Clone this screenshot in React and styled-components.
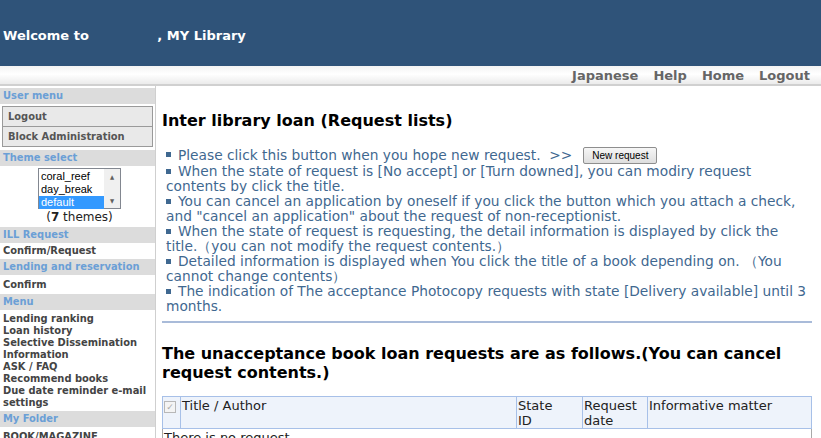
import React from 'react';
import styled, { createGlobalStyle } from 'styled-components';

const GlobalStyle = createGlobalStyle`
  html, body {
    margin: 0;
    padding: 0;
    background: #fff;
  }
  body {
    font-family: "DejaVu Sans", Verdana, sans-serif;
    width: 821px;
    overflow: hidden;
  }
`;

// ============== Header
const Header = styled.div`
  height: 66px;
  background-color: #2f5379;
  display: flex;
  align-items: center;
  padding: 4px 0 0 3px;
  box-sizing: border-box;
  color: #fff;
  font-weight: bold;
  font-size: 13px;
`;
const UserName = styled.span`
  display: inline-block;
  width: 64px;
`;

const NavBar = styled.div`
  height: 18px;
  background: linear-gradient(#f3f3f3, #ffffff 45%, #ebebeb);
  border-bottom: 2px solid #d0d0d0;
  display: flex;
  justify-content: flex-end;
  align-items: center;
  gap: 15px;
  padding-right: 11px;
`;
const NavLink = styled.span`
  color: #666;
  font-weight: bold;
  font-size: 13px;
`;

// ============== Corpo
const Body = styled.div`
  display: flex;
  align-items: stretch;
  min-height: 360px;
`;

const Sidebar = styled.div`
  width: 155px;
  flex-shrink: 0;
  border-right: 1px solid #cfcfcf;
  padding-top: 2px;
  font-family: "DejaVu Sans Condensed", "DejaVu Sans", sans-serif;
  font-size: 11px;
`;
const SideHead = styled.div`
  background-color: #dcdcdc;
  color: #6b9fd6;
  font-weight: bold;
  height: 16px;
  line-height: 16px;
  padding-left: 3px;
  margin-top: ${p => p.$gap || 0}px;
`;
const BoxList = styled.div`
  margin: 2px 2px 0 2px;
  border: 1px solid #9a9a9a;
  background: #e9e9e9;
`;
const BoxItem = styled.div`
  height: 19px;
  line-height: 19px;
  padding-left: 5px;
  color: #555;
  font-weight: bold;
  border-top: ${p => (p.$first ? 'none' : '1px solid #9a9a9a')};
`;
const SideItem = styled.div`
  color: #444;
  font-weight: bold;
  padding: ${p => p.$pad || '1px 0 1px 3px'};
  line-height: ${p => p.$lh || 14}px;
`;

const ThemeBox = styled.div`
  display: flex;
  flex-direction: column;
  align-items: center;
  padding: 2px 0 3px;
`;
const ListBox = styled.div`
  width: 81px;
  height: 39px;
  border: 1px solid #828790;
  display: flex;
  background: #fff;
  margin-left: 4px;
`;
const Options = styled.div`
  flex: 1;
  padding-top: 1px;
`;
const Option = styled.div`
  height: 13px;
  line-height: 13px;
  padding-left: 2px;
  font-family: "Liberation Sans", Arial, sans-serif;
  font-size: 11px;
  color: ${p => (p.$selected ? '#fff' : '#000')};
  background: ${p => (p.$selected ? '#3399ff' : 'transparent')};
`;
const ScrollBar = styled.div`
  width: 16px;
  background: #f0f0f0;
  display: flex;
  flex-direction: column;
  justify-content: space-between;
  align-items: center;
  padding: 4px 0;
  box-sizing: border-box;
  font-size: 6px;
  color: #606060;
`;
const ThemeCount = styled.div`
  font-family: "DejaVu Sans", Verdana, sans-serif;
  font-size: 12px;
  color: #222;
  margin-top: 1px;
  margin-left: 4px;
  b { font-weight: bold; }
`;

// ============== Conteúdo
const Main = styled.div`
  flex: 1;
  padding: 25px 9px 0 6px;
  min-width: 0;
`;
const Title = styled.h2`
  margin: 0;
  font-size: 16px;
  line-height: 19px;
  font-weight: bold;
  color: #000;
`;
const Notes = styled.div`
  margin: 17px 0 0 4px;
  color: #3f6890;
  font-size: 13.75px;
  line-height: 15px;
`;
const Note = styled.div`
  margin: 0;
`;
const Bullet = styled.span`
  display: inline-block;
  width: 5px;
  height: 5px;
  background: #3f6890;
  margin: 0 7px 2px 0;
  vertical-align: middle;
`;
const NewButton = styled.button`
  font-family: "Liberation Sans", Arial, sans-serif;
  font-size: 10px;
  color: #000;
  height: 17px;
  padding: 0 8px;
  margin-left: 11px;
  border: 1px solid #8e8e8e;
  border-radius: 2px;
  background: linear-gradient(#f6f6f6, #dedede);
  vertical-align: middle;
`;
const Rule = styled.hr`
  border: none;
  height: 2px;
  background: #a9bbd9;
  margin: 7px 0 0;
`;
const SubTitle = styled(Title)`
  margin-top: 21px;
`;

const Table = styled.table`
  width: 100%;
  margin-top: 14px;
  border-collapse: collapse;
  font-family: "DejaVu Sans", Verdana, sans-serif;
  font-size: 13px;
  color: #222;
`;
const Th = styled.th`
  background: #eef3fb;
  border: 1px solid #a7c0e8;
  font-weight: normal;
  text-align: left;
  vertical-align: top;
  line-height: 15px;
  padding: 1px 1px 0;
  height: 27px;
  width: ${p => p.$w || 'auto'};
`;
const Td = styled.td`
  border: 1px solid #a9a9a9;
  padding: 1px;
  line-height: 15px;
`;
const Check = styled.span`
  display: inline-block;
  width: 10px;
  height: 10px;
  border: 1px solid #b8b8b8;
  background: #f4f4f4;
  color: #aaa;
  font-size: 9px;
  line-height: 10px;
  text-align: center;
  margin-top: 2px;
`;

const menu = [
  'Lending ranking',
  'Loan history',
  'Selective Dissemination',
  'Information',
  'ASK / FAQ',
  'Recommend books',
  'Due date reminder e-mail',
  'settings',
];

const notes = [
  'When the state of request is [No accept] or [Turn downed], you can modiry request contents by click the title.',
  'You can cancel an application by oneself if you click the button which you attach a check, and "cancel an application" about the request of non-receptionist.',
  'When the state of request is requesting, the detail information is displayed by click the title.\uFF08you can not modify the request contents.\uFF09',
  'Detailed information is displayed when You click the title of a book depending on. \uFF08You cannot change contents\uFF09',
  'The indication of The acceptance Photocopy requests with state [Delivery available] until 3 months.',
];

export default function App() {
  return (
    <>
      <GlobalStyle />
      <Header>
        Welcome to&nbsp;<UserName />, MY Library
      </Header>
      <NavBar>
        <NavLink>Japanese</NavLink>
        <NavLink>Help</NavLink>
        <NavLink>Home</NavLink>
        <NavLink>Logout</NavLink>
      </NavBar>

      <Body>
        <Sidebar>
          <SideHead>User menu</SideHead>
          <BoxList>
            <BoxItem $first>Logout</BoxItem>
            <BoxItem>Block Administration</BoxItem>
          </BoxList>
          <SideHead $gap={3}>Theme select</SideHead>
          <ThemeBox>
            <ListBox>
              <Options>
                <Option>coral_reef</Option>
                <Option>day_break</Option>
                <Option $selected>default</Option>
              </Options>
              <ScrollBar>
                <span>▲</span>
                <span>▼</span>
              </ScrollBar>
            </ListBox>
            <ThemeCount>(<b>7</b> themes)</ThemeCount>
          </ThemeBox>
          <SideHead>ILL Request</SideHead>
          <SideItem>Confirm/Request</SideItem>
          <SideHead>Lending and reservation</SideHead>
          <SideItem $pad="3px 0 2px 3px">Confirm</SideItem>
          <SideHead>Menu</SideHead>
          <SideItem $pad="3px 0 2px 3px" $lh={12}>
            {menu.map(m => (
              <div key={m}>{m}</div>
            ))}
          </SideItem>
          <SideHead>My Folder</SideHead>
          <SideItem $pad="3px 0 0 3px">BOOK/MAGAZINE</SideItem>
        </Sidebar>

        <Main>
          <Title>Inter library loan (Request lists)</Title>
          <Notes>
            <Note>
              <Bullet />Please click this button when you hope new request.&nbsp;&nbsp;&gt;&gt;
              <NewButton>New request</NewButton>
            </Note>
            {notes.map(n => (
              <Note key={n}>
                <Bullet />{n}
              </Note>
            ))}
          </Notes>
          <Rule />
          <SubTitle>
            The unacceptance book loan requests are as follows.(You can cancel request contents.)
          </SubTitle>
          <Table>
            <thead>
              <tr>
                <Th $w="15px"><Check>✓</Check></Th>
                <Th>Title / Author</Th>
                <Th $w="63px">State<br />ID</Th>
                <Th $w="62px">Request<br />date</Th>
                <Th $w="161px">Informative matter</Th>
              </tr>
            </thead>
            <tbody>
              <tr>
                <Td colSpan={5}>There is no request</Td>
              </tr>
            </tbody>
          </Table>
        </Main>
      </Body>
    </>
  );
}
